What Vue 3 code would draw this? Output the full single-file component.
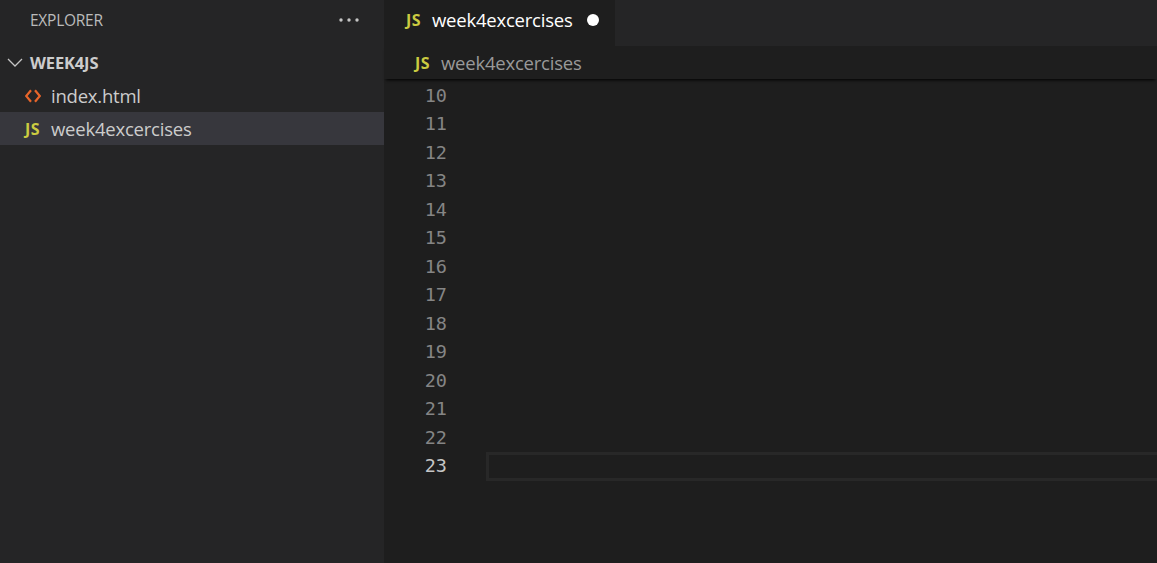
<script setup>
const lines = Array.from({ length: 14 }, (_, i) => i + 10)
</script>

<template>
  <div class="app">
    <aside class="sidebar">
      <header class="side-head">
        <span>EXPLORER</span>
        <svg class="dots" width="20" height="4" viewBox="0 0 20 4"><circle cx="2" cy="2" r="1.700"/><circle cx="10" cy="2" r="1.700"/><circle cx="18" cy="2" r="1.700"/></svg>
      </header>
      <div class="folder">
        <svg class="chev" width="16" height="10" viewBox="0 0 16 10"><path d="M1 1l7 7 7-7" fill="none" stroke="#c5c5c5" stroke-width="1.300"/></svg>
        <span>WEEK4JS</span>
      </div>
      <div class="file">
        <svg class="html" width="16" height="14" viewBox="0 0 16 14"><path d="M6 1.200L1.200 7 6 12.800M10 1.200L14.800 7 10 12.800" fill="none" stroke="#e8652a" stroke-width="2.200"/></svg>
        <span>index.html</span>
      </div>
      <div class="file selected">
        <span class="js">JS</span>
        <span>week4excercises</span>
      </div>
    </aside>
    <main class="main">
      <div class="tabs">
        <div class="tab">
          <span class="js">JS</span>
          <span class="tab-name">week4excercises</span>
          <i class="modified"></i>
        </div>
      </div>
      <div class="crumbs">
        <span class="js">JS</span>
        <span>week4excercises</span>
      </div>
      <div class="editor">
        <div v-for="n in lines" :key="n" class="line" :class="{ current: n === 23 }">
          <span class="num">{{ n }}</span>
          <span class="code"></span>
        </div>
      </div>
    </main>
  </div>
</template>

<style>
html, body { margin: 0; background: #1e1e1e; overflow: hidden; }
</style>

<style scoped>
.app {
  display: flex;
  width: 1157px;
  height: 563px;
  overflow: hidden;
  background: #1e1e1e;
  font-family: "Open Sans", "Noto Sans", sans-serif;
}
.sidebar {
  width: 384px;
  flex: none;
  background: #252526;
  color: #cccccc;
}
.side-head {
  height: 46px;
  box-sizing: border-box;
  padding: 0 25px 7px 30px;
  display: flex;
  align-items: center;
  justify-content: space-between;
  font-size: 15.500px;
  letter-spacing: -0.250px;
  color: #bbbbbb;
}
.dots { fill: #c5c5c5; }
.folder {
  height: 33px;
  display: flex;
  align-items: center;
  font-size: 16.500px;
  font-weight: 700;
  color: #cccccc;
  letter-spacing: -0.150px;
}
.chev { margin-left: 7px; margin-right: 7px; }
.file {
  height: 33px;
  display: flex;
  align-items: center;
  padding-left: 25px;
  font-size: 18.500px;
  letter-spacing: -0.220px;
  color: #cccccc;
}
.file .js { width: 26px; flex: none; }
.file .html { width: 16px; margin-right: 10px; flex: none; }
.selected { background: #37373d; }
.js {
  font-family: "Open Sans", sans-serif;
  font-weight: 700;
  font-size: 16px;
  letter-spacing: 0.500px;
  color: #cbcb41;
}
.main {
  flex: 1;
  min-width: 0;
  display: flex;
  flex-direction: column;
}
.tabs {
  height: 46px;
  flex: none;
  background: #252526;
  display: flex;
}
.tab {
  width: 231px;
  box-sizing: border-box;
  background: #1e1e1e;
  display: flex;
  align-items: center;
  padding-left: 22px;
  color: #ffffff;
  font-size: 18.500px;
  letter-spacing: -0.220px;
  padding-bottom: 7px;
}
.tab .js { width: 26px; }
.tab-name { width: 155px; }
.modified {
  width: 12px;
  height: 12px;
  border-radius: 50%;
  background: #ffffff;
}
.crumbs {
  height: 33px;
  flex: none;
  display: flex;
  align-items: center;
  padding-left: 31px;
  font-size: 18.500px;
  letter-spacing: -0.220px;
  color: #999999;
  box-shadow: 0 3px 3px -2px #000000;
  position: relative;
}
.crumbs .js { width: 26px; }
.editor {
  flex: 1;
  padding-top: 2.500px;
}
.line {
  height: 28.500px;
  display: flex;
  align-items: stretch;
}
.num {
  width: 63px;
  flex: none;
  text-align: right;
  font-family: "DejaVu Sans Mono", monospace;
  font-size: 18.500px;
  line-height: 28.500px;
  color: #858585;
}
.code { margin-left: 39px; flex: 1; box-sizing: border-box; }
.current .num { color: #c6c6c6; }
.current .code { border: 3px solid #282828; border-right: 0; }
</style>
